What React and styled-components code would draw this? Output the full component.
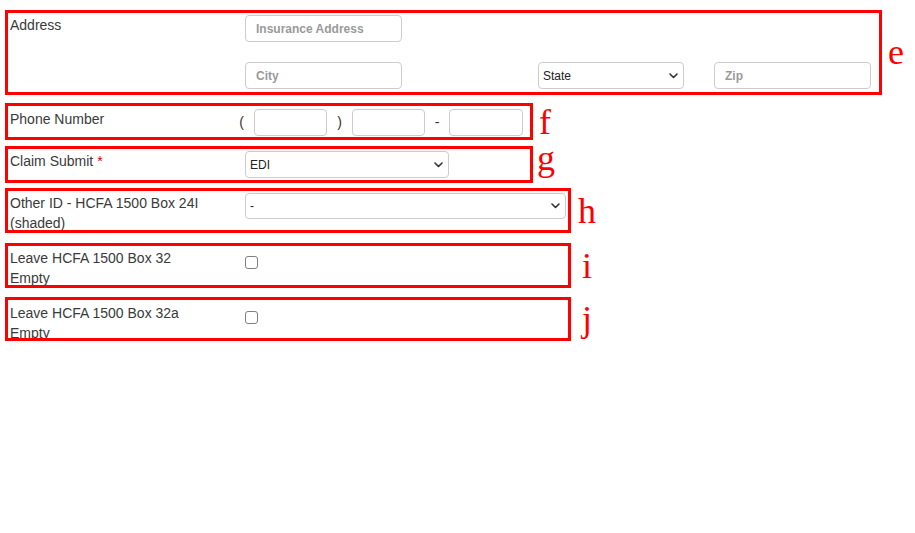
import React from "react";
import styled, { createGlobalStyle } from "styled-components";

const GlobalStyle = createGlobalStyle`
  html, body {
    margin: 0;
    padding: 0;
    background: #fff;
  }
  body {
    font-family: "Liberation Sans", Arial, sans-serif;
    color: #333;
  }
`;

const Page = styled.div`
  display: flex;
  flex-direction: column;
  align-items: flex-start;
  padding: 10px 0 0 5px;
`;

const Annotated = styled.div`
  display: flex;
  align-items: center;
  margin-top: ${(p) => p.$mt || 0}px;
`;

const Frame = styled.div`
  position: relative;
  box-sizing: border-box;
  width: ${(p) => p.$w}px;
  height: ${(p) => p.$h}px;
  padding: ${(p) => p.$pt || 5}px 8px 0 5px;
  display: grid;
  grid-template-columns: ${(p) => p.$labelWidth || 235}px 1fr;
  align-items: start;

  &::after {
    content: "";
    position: absolute;
    inset: 0;
    border: 3px solid #ff0000;
    pointer-events: none;
  }
`;

const Letter = styled.span`
  margin-left: ${(p) => p.$gap}px;
  transform: translateY(${(p) => -(p.$lift || 0)}px);
  font-family: "Liberation Serif", "Times New Roman", serif;
  font-size: 36px;
  line-height: 28px;
  color: #ff0000;
`;

const Label = styled.div`
  font-size: 14px;
  line-height: 20px;
  color: #3a3a3a;
  padding-right: 39px;
`;

const Required = styled.span`
  color: #e00000;
`;

const Stack = styled.div`
  display: flex;
  flex-direction: column;
  gap: 20px;
`;

const Line = styled.div`
  display: flex;
  align-items: center;
`;

const TextInput = styled.input`
  box-sizing: border-box;
  width: ${(p) => p.$w}px;
  height: 27px;
  margin: 0 0 0 ${(p) => p.$ml || 0}px;
  padding: 0 10px;
  border: 1px solid #ccc;
  border-radius: 4px;
  background: #fff;
  font-family: inherit;
  font-size: 12px;
  color: #333;
  outline: none;

  &::placeholder {
    color: #9a9a9a;
    font-weight: bold;
  }
`;

const SelectBox = styled.div`
  position: relative;
  width: ${(p) => p.$w}px;
  height: ${(p) => p.$h || 27}px;
  margin-left: ${(p) => p.$ml || 0}px;
`;

const NativeSelect = styled.select`
  appearance: none;
  box-sizing: border-box;
  width: 100%;
  height: 100%;
  margin: 0;
  padding: 0 24px 0 4px;
  border: 1px solid #ccc;
  border-radius: 4px;
  background: #fff;
  font-family: inherit;
  font-size: 12px;
  color: #222;
  outline: none;
`;

const Chevron = styled.svg`
  position: absolute;
  right: 6px;
  top: 50%;
  margin-top: -3px;
  width: 9px;
  height: 6px;
  pointer-events: none;
`;

const Punct = styled.span`
  width: ${(p) => p.$w}px;
  text-align: center;
  font-size: 14px;
  line-height: 27px;
  color: #333;
`;

const Check = styled.input.attrs({ type: "checkbox" })`
  appearance: none;
  box-sizing: border-box;
  width: 13px;
  height: 13px;
  margin: 8px 0 0;
  border: 1px solid #808080;
  border-radius: 3px;
  background: #fff;
`;

function Select({ w, h, ml, value }) {
  return (
    <SelectBox $w={w} $h={h} $ml={ml}>
      <NativeSelect defaultValue={value}>
        <option value={value}>{value}</option>
      </NativeSelect>
      <Chevron viewBox="0 0 9 6">
        <polyline
          points="1,1 4.5,4.5 8,1"
          fill="none"
          stroke="#333"
          strokeWidth="1.6"
          strokeLinecap="round"
          strokeLinejoin="round"
        />
      </Chevron>
    </SelectBox>
  );
}

export default function App() {
  return (
    <>
      <GlobalStyle />
      <Page>
        <Annotated>
          <Frame $w={877} $h={85}>
            <Label>Address</Label>
            <Stack>
              <TextInput $w={157} placeholder="Insurance Address" />
              <Line>
                <TextInput $w={157} placeholder="City" />
                <Select w={146} ml={136} value="State" />
                <TextInput $w={157} $ml={30} placeholder="Zip" />
              </Line>
            </Stack>
          </Frame>
          <Letter $gap={6} $lift={1}>e</Letter>
        </Annotated>

        <Annotated $mt={8}>
          <Frame $w={528} $h={37} $pt={6} $labelWidth={219}>
            <Label>Phone Number</Label>
            <Line>
              <Punct $w={25}>(</Punct>
              <TextInput $w={73} />
              <Punct $w={25}>)</Punct>
              <TextInput $w={73} />
              <Punct $w={24}>-</Punct>
              <TextInput $w={74} />
            </Line>
          </Frame>
          <Letter $gap={6}>f</Letter>
        </Annotated>

        <Annotated $mt={6}>
          <Frame $w={528} $h={37}>
            <Label>
              Claim Submit <Required>*</Required>
            </Label>
            <Select w={204} value="EDI" />
          </Frame>
          <Letter $gap={4} $lift={7}>g</Letter>
        </Annotated>

        <Annotated $mt={5}>
          <Frame $w={566} $h={45}>
            <Label>Other ID - HCFA 1500 Box 24I (shaded)</Label>
            <Select w={321} h={26} value="-" />
          </Frame>
          <Letter $gap={7}>h</Letter>
        </Annotated>

        <Annotated $mt={10}>
          <Frame $w={566} $h={45}>
            <Label>Leave HCFA 1500 Box 32 Empty</Label>
            <div>
              <Check />
            </div>
          </Frame>
          <Letter $gap={11}>i</Letter>
        </Annotated>

        <Annotated $mt={9}>
          <Frame $w={566} $h={44} $pt={6}>
            <Label>Leave HCFA 1500 Box 32a Empty</Label>
            <div>
              <Check />
            </div>
          </Frame>
          <Letter $gap={11}>j</Letter>
        </Annotated>
      </Page>
    </>
  );
}
